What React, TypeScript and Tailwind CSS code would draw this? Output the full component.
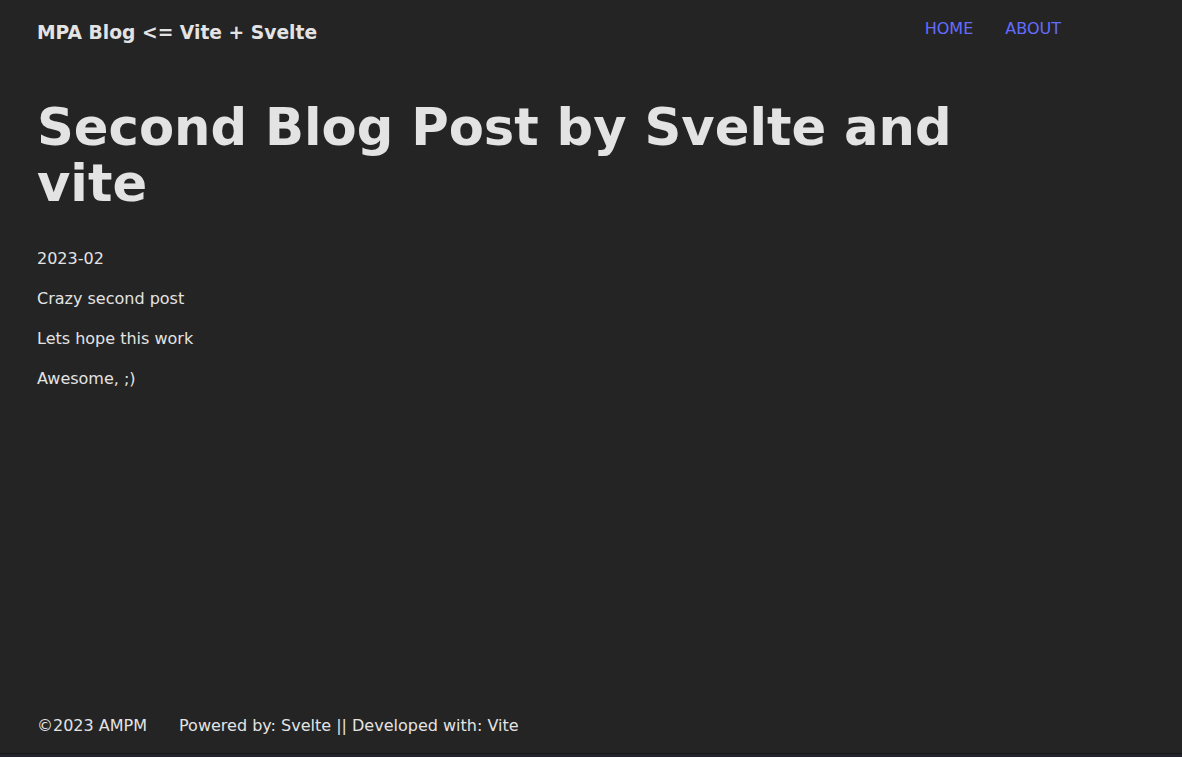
const App = () => {
  return (
    <div className="flex flex-col bg-[#242424] text-[#e3e3e3] font-['DejaVu_Sans',sans-serif]">
      <div className="flex h-[753px] flex-col">
        <div className="ml-[37px] flex w-[1024px] flex-1 flex-col">
          {/* header */}
          <header className="flex h-[65px] items-start justify-between">
            <h3 className="pt-[19px] text-[18.72px] font-bold leading-[28px]">MPA Blog &lt;= Vite + Svelte</h3>
            <nav className="flex gap-8 pt-[17px] text-base leading-6 text-[#646cff]">
              <a href="#">HOME</a>
              <a href="#">ABOUT</a>
            </nav>
          </header>

          {/* post */}
          <main className="flex-1">
            <h1 className="mt-[34px] mb-[35px] text-[51.2px] font-bold leading-[1.1]">
              Second Blog Post by Svelte and vite
            </h1>
            <div className="flex flex-col gap-4 text-base leading-6">
              <p>2023-02</p>
              <p>Crazy second post</p>
              <p>Lets hope this work</p>
              <p>Awesome, ;)</p>
            </div>
          </main>

          {/* footer */}
          <footer className="flex gap-8 pb-[15px] text-base leading-6">
            <span>©2023 AMPM</span>
            <span>Powered by: Svelte || Developed with: Vite</span>
          </footer>
        </div>
      </div>
      <div className="h-[4px] border-t border-[#161616] bg-[#23232e]" />
    </div>
  );
};

export default App;
